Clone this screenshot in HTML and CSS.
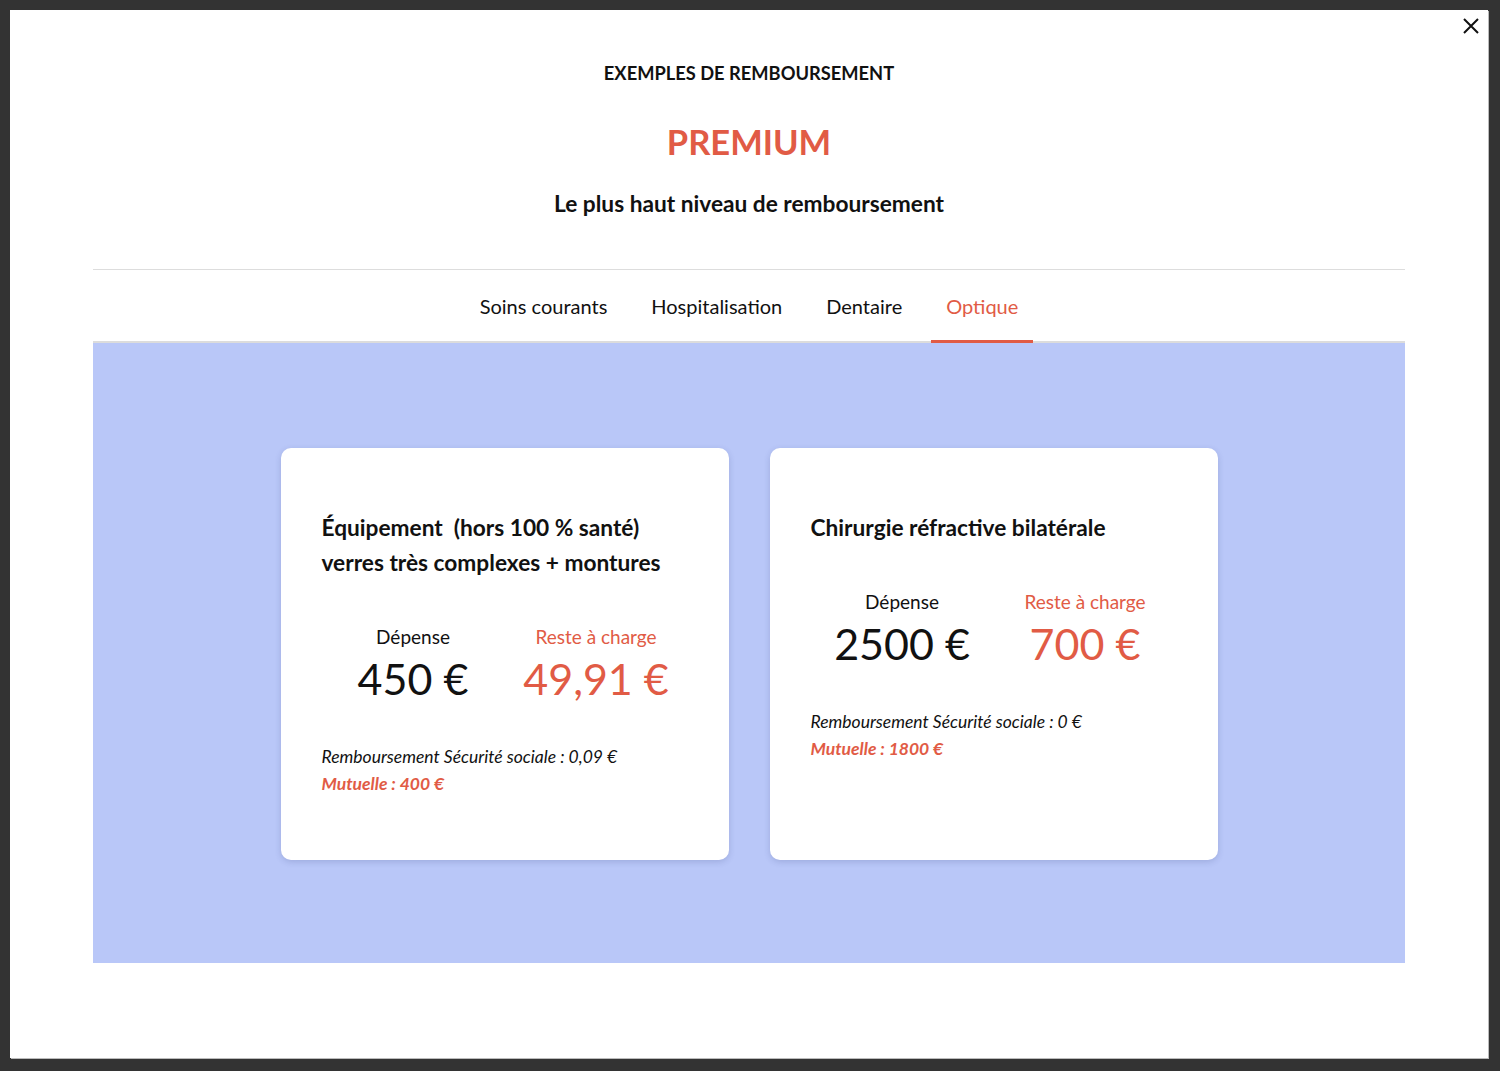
FILE: index.html
```html
<!DOCTYPE html>
<html lang="fr">
<head>
  <meta charset="UTF-8">
  <meta name="viewport" content="width=device-width, initial-scale=1.0">
  <title>Exemples de remboursement</title>
  <link rel="stylesheet" href="styles.css">
</head>
<body>
  <div class="modal">
    <button class="close-btn" aria-label="Fermer">
      <svg width="16" height="16" viewBox="0 0 16 16">
        <path d="M1 1 L15 15 M15 1 L1 15" stroke="#111" stroke-width="2" fill="none"/>
      </svg>
    </button>

    <div class="modal-head">
      <p class="kicker">EXEMPLES DE REMBOURSEMENT</p>
      <h1 class="plan">PREMIUM</h1>
      <p class="tagline">Le plus haut niveau de remboursement</p>
    </div>

    <div class="content">
      <nav class="tabs">
        <span class="tab">Soins courants</span>
        <span class="tab">Hospitalisation</span>
        <span class="tab">Dentaire</span>
        <span class="tab active">Optique</span>
      </nav>

      <div class="panel">
        <div class="card">
          <h2 class="card-title">Équipement &nbsp;(hors 100 % santé)<br>verres très complexes + montures</h2>
          <div class="stats">
            <div class="stat">
              <span class="stat-label">Dépense</span>
              <span class="stat-value">450 €</span>
            </div>
            <div class="stat red">
              <span class="stat-label">Reste à charge</span>
              <span class="stat-value">49,91 €</span>
            </div>
          </div>
          <p class="note">Remboursement Sécurité sociale : 0,09 €</p>
          <p class="note mutuelle">Mutuelle : 400 €</p>
        </div>

        <div class="card">
          <h2 class="card-title">Chirurgie réfractive bilatérale</h2>
          <div class="stats">
            <div class="stat">
              <span class="stat-label">Dépense</span>
              <span class="stat-value">2500 €</span>
            </div>
            <div class="stat red">
              <span class="stat-label">Reste à charge</span>
              <span class="stat-value">700 €</span>
            </div>
          </div>
          <p class="note">Remboursement Sécurité sociale : 0 €</p>
          <p class="note mutuelle">Mutuelle : 1800 €</p>
        </div>
      </div>
    </div>
  </div>
</body>
</html>
```

FILE: styles.css
```css
body {
  margin: 0;
  padding: 10px 12px 13px 10px;
  background: #333;
  font-family: 'Lato', 'Noto Sans', sans-serif;
  color: #111;
}

.modal {
  position: relative;
  background: #fff;
  height: 1048px;
  box-sizing: border-box;
  padding: 51px 83px 0;
  box-shadow: 1px 1px 0 #bbb;
}

.close-btn {
  position: absolute;
  top: 8px;
  right: 9px;
  background: none;
  border: none;
  padding: 0;
  width: 16px;
  height: 16px;
  cursor: pointer;
}

.close-btn svg {
  display: block;
}

.modal-head {
  text-align: center;
  padding-bottom: 51px;
  border-bottom: 1px solid #ddd;
}

.kicker {
  margin: 0;
  font-size: 18.3px;
  line-height: 24px;
  font-weight: 700;
}

.plan {
  margin: 33px 0 0;
  font-size: 34.5px;
  line-height: 48px;
  font-weight: 700;
  color: #e15b45;
}

.tagline {
  margin: 24px 0 0;
  font-size: 22.7px;
  line-height: 28px;
  font-weight: 700;
}

.tabs {
  display: flex;
  justify-content: center;
  gap: 14px;
  border-bottom: 2px solid #dcdcdc;
}

.tab {
  padding: 23px 15px 21px;
  font-size: 20px;
  line-height: 26px;
  border-bottom: 3px solid transparent;
  margin-bottom: -2px;
}

.tab.active {
  color: #e15b45;
  border-bottom-color: #e15b45;
}

.panel {
  background: #b9c7f8;
  height: 620px;
  box-sizing: border-box;
  padding-top: 105px;
  display: flex;
  justify-content: center;
  align-items: flex-start;
  gap: 41px;
}

.card {
  width: 448px;
  height: 412px;
  box-sizing: border-box;
  background: #fff;
  border-radius: 10px;
  box-shadow: 0 2px 6px rgba(40, 50, 110, 0.18);
  padding: 62px 41px;
}

.card-title {
  margin: 0;
  font-size: 22.7px;
  line-height: 35px;
  font-weight: 700;
}

.stats {
  display: grid;
  grid-template-columns: 1fr 1fr;
  margin-top: 44px;
  text-align: center;
}

.stat-label {
  display: block;
  font-size: 19px;
  line-height: 26px;
}

.stat-value {
  display: block;
  font-size: 43px;
  line-height: 58px;
}

.stat.red {
  color: #e15b45;
}

.note {
  margin: 0;
  font-size: 17.5px;
  line-height: 27px;
  font-style: italic;
}

.stats + .note {
  margin-top: 35px;
}

.note.mutuelle {
  font-weight: 700;
  color: #e15b45;
}
```
